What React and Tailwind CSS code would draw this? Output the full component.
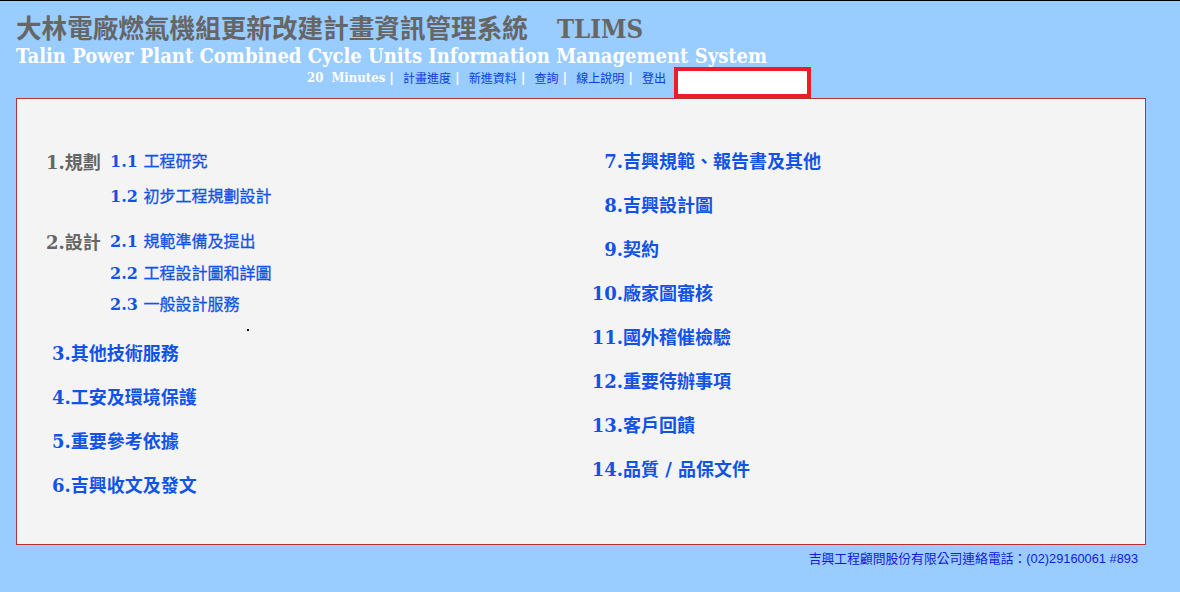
const serif = "font-['DejaVu_Serif','Noto_Sans_CJK_TC',serif]";

const links = ['計畫進度', '新進資料', '查詢', '線上說明', '登出'];

const leftGroups = [
  {
    label: '1.規劃',
    cls: '',
    items: [
      { no: '1.1', text: '工程研究', cls: 'h-[32px]' },
      { no: '1.2', text: '初步工程規劃設計', cls: 'h-[32px] mt-[3px]' },
    ],
  },
  {
    label: '2.設計',
    cls: 'mt-[13px]',
    items: [
      { no: '2.1', text: '規範準備及提出', cls: 'h-[32px]' },
      { no: '2.2', text: '工程設計圖和詳圖', cls: 'h-[31px]' },
      { no: '2.3', text: '一般設計服務', cls: 'h-[32px]' },
    ],
  },
];

const leftItems = ['3.其他技術服務', '4.工安及環境保護', '5.重要參考依據', '6.吉興收文及發文'];

const rightItems = [
  ['7.', '吉興規範、報告書及其他'],
  ['8.', '吉興設計圖'],
  ['9.', '契約'],
  ['10.', '廠家圖審核'],
  ['11.', '國外稽催檢驗'],
  ['12.', '重要待辦事項'],
  ['13.', '客戶回饋'],
  ['14.', '品質 / 品保文件'],
];

export default function App() {
  return (
    <div className={`min-h-[592px] bg-[#99ccff] border-t border-black px-4 ${serif}`}>
      {/* 標題 */}
      <h1 className="pt-[12px] text-[25.6px] leading-[32px] font-bold text-[#666666] whitespace-nowrap font-stretch-condensed">
        大林電廠燃氣機組更新改建計畫資訊管理系統<span className="ml-[29px]">TLIMS</span>
      </h1>
      <h2 className="text-[20px] leading-[22px] font-bold text-white whitespace-nowrap font-stretch-condensed">
        Talin Power Plant Combined Cycle Units Information Management System
      </h2>

      {/* 選單列 */}
      <div className="flex items-start h-[31px] pl-[291px] whitespace-nowrap">
        <span className="mt-[3px] text-[13px] leading-[16px] font-bold text-white font-stretch-condensed">20&nbsp;&nbsp;Minutes</span>
        {links.map(l => (
          <span key={l} className="flex items-start mt-[3px]">
            <span className="text-[13px] leading-[16px] font-bold text-white ml-[4px] mr-[9px]">|</span>
            <a href="#" className="text-[12px] leading-[16px] text-[#0a3ee0] font-['Noto_Sans_CJK_TC',sans-serif]">{l}</a>
          </span>
        ))}
        <div className="ml-[8px] w-[137px] h-[31px] border-4 border-[#ee1c25] bg-white" />
      </div>

      {/* 主選單 */}
      <div className="w-[1130px] h-[447px] border border-[#b23434] bg-[#f4f4f4] grid grid-cols-[563px_1fr] text-[#1253e6] font-bold">
        <div className="pl-[29px] pt-[47px]">
          {leftGroups.map(g => (
            <div key={g.label} className={`flex ${g.cls}`}>
              <div className="w-[64px] h-[32px] flex items-center text-[18px] text-[#666666]">{g.label}</div>
              <div className="flex flex-col">
                {g.items.map(it => (
                  <div key={it.no} className={`${it.cls} flex items-center text-[16px] whitespace-nowrap`}>
                    {it.no}&nbsp;<span className="font-normal [-webkit-text-stroke:0.3px]">{it.text}</span>
                  </div>
                ))}
              </div>
            </div>
          ))}
          <div className="h-[10px] flex items-end pl-[201px]">
            <div className="w-[2px] h-[2px] bg-black" />
          </div>
          {leftItems.map(t => (
            <div key={t} className="h-[44px] flex items-center pl-[6px] text-[18px] whitespace-nowrap">
              {t}
            </div>
          ))}
        </div>

        <div className="pt-[40px]">
          {rightItems.map(([n, t]) => (
            <div key={n} className="h-[44px] flex items-center text-[18px] whitespace-nowrap">
              <span className="w-[43px] text-right">{n}</span>
              <span>{t}</span>
            </div>
          ))}
        </div>
      </div>

      {/* 頁尾 */}
      <div className="w-[1122px] pt-[4px] text-right text-[12.8px] text-[#1818dd] font-['Liberation_Sans','Noto_Sans_CJK_TC',sans-serif]">
        吉興工程顧問股份有限公司連絡電話：(02)29160061 #893
      </div>
    </div>
  );
}
